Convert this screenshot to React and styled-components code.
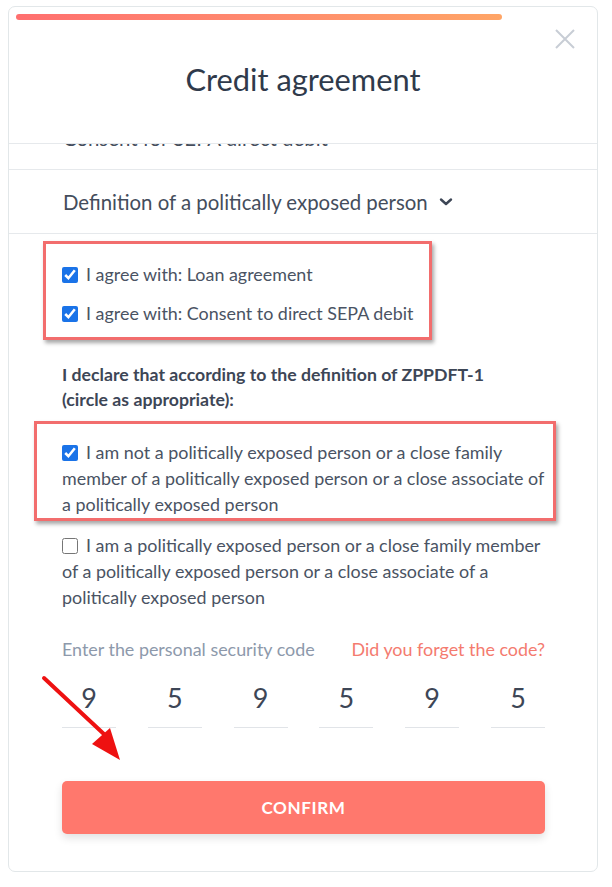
import React from 'react'
import styled, { createGlobalStyle } from 'styled-components'

const GlobalStyle = createGlobalStyle`
    html, body {
        margin: 0;
        padding: 0;
        background: #ffffff;
    }
    body {
        font-family: Lato, "Noto Sans", sans-serif;
        color: #3d4656;
    }
`

const Page = styled.div`
    padding: 6px 12px 14px 8px;
`

const Card = styled.div`
    position: relative;
    width: 590px;
    height: 866px;
    box-sizing: border-box;
    border: 1px solid #e2e7e9;
    border-radius: 7px;
    background: #fff;
    display: flex;
    flex-direction: column;
    overflow: hidden;
`

const Header = styled.div`
    position: relative;
    height: 136px;
    flex-shrink: 0;
`

const Progress = styled.div`
    margin: 7px 0 0 7px;
    width: 486px;
    height: 6px;
    border-radius: 3px;
    background: linear-gradient(to right, #ff6f6f 0%, #ff8a6e 50%, #ffa566 100%);
`

const Close = styled.button`
    position: absolute;
    top: 20px;
    right: 20px;
    width: 24px;
    height: 24px;
    padding: 0;
    border: none;
    background: none;
    cursor: pointer;
`

const Title = styled.h1`
    margin: 41px 0 0;
    text-align: center;
    font-size: 30.8px;
    font-weight: 400;
    color: #2f3a4b;
`

const Scroll = styled.div`
    flex: 1;
    border-top: 1px solid #e6e9ec;
    overflow: hidden;
`

const ScrollInner = styled.div`
    margin-top: -38px;
`

const Accordion = styled.div`
    height: 63px;
    border-bottom: 1px solid #e6e9ec;
    display: flex;
    align-items: center;
    padding-left: 54px;
    font-size: 20.4px;
    color: #444d5c;
    gap: 11px;
`

const Body = styled.div`
    padding: 0 52px 0 53px;
    display: flex;
    flex-direction: column;
`

const Group = styled.div`
    position: relative;
    display: flex;
    flex-direction: column;
    gap: 13px;
    margin-top: ${p => p.top}px;
    &::before {
        content: '';
        position: absolute;
        top: ${p => p.box[0]}px;
        right: ${p => p.box[1]}px;
        bottom: ${p => p.box[2]}px;
        left: ${p => p.box[3]}px;
        border: 3px solid #f26d6d;
        box-shadow: 2px 3px 4px rgba(0, 0, 0, 0.35);
        pointer-events: none;
    }
`

const Check = styled.label`
    display: block;
    font-size: 17.9px;
    line-height: 26px;
    color: #4a5363;
    input {
        width: 16px;
        height: 16px;
        margin: 0 8px 0 0;
        vertical-align: -2px;
        accent-color: #1a73e8;
    }
`

const Declare = styled.p`
    margin: 36px 0 27px;
    font-size: 17.7px;
    font-weight: 700;
    line-height: 25px;
    color: #3d4656;
`

const Plain = styled.div`
    margin-top: 15px;
`

const CodeHead = styled.div`
    margin-top: 28px;
    display: flex;
    justify-content: space-between;
    font-size: 17.9px;
`

const CodeLabel = styled.span`
    color: #8d99ab;
`

const Forgot = styled.a`
    color: #f47b6f;
    text-decoration: none;
    cursor: pointer;
`

const Digits = styled.div`
    position: relative;
    margin-top: 13px;
    display: flex;
    justify-content: space-between;
`

const Digit = styled.div`
    width: 54px;
    height: 54px;
    border-bottom: 1px solid #e1e4e8;
    text-align: center;
    font-size: 27px;
    line-height: 50px;
    color: #3d4656;
`

const Arrow = styled.svg`
    position: absolute;
    left: -22px;
    top: 1px;
    pointer-events: none;
`

const Confirm = styled.button`
    margin-top: 53px;
    height: 53px;
    border: none;
    border-radius: 5px;
    background: #ff786d;
    color: #fff;
    font-family: inherit;
    font-size: 17.1px;
    font-weight: 700;
    letter-spacing: 0.6px;
    box-shadow: 0 4px 8px rgba(0, 0, 0, 0.12);
    cursor: pointer;
`

const code = ['9', '5', '9', '5', '9', '5']

export default function App() {
    return (
        <Page>
            <GlobalStyle />
            <Card>
                <Header>
                    <Progress />
                    <Close aria-label="close">
                        <svg width="24" height="24" viewBox="0 0 24 24">
                            <path d="M3 3 L21 21 M21 3 L3 21" stroke="#c8cdd5" strokeWidth="2" />
                        </svg>
                    </Close>
                    <Title>Credit agreement</Title>
                </Header>
                <Scroll>
                    <ScrollInner>
                        <Accordion>
                            Consent for SEPA direct debit
                            <Chevron />
                        </Accordion>
                        <Accordion>
                            Definition of a politically exposed person
                            <Chevron />
                        </Accordion>
                        <Body>
                            <Group top={27} box={[-20, 113, -14, -19]}>
                                <Check><input type="checkbox" defaultChecked />I agree with: Loan agreement</Check>
                                <Check><input type="checkbox" defaultChecked />I agree with: Consent to direct SEPA debit</Check>
                            </Group>
                            <Declare>
                                I declare that according to the definition of ZPPDFT-1<br />
                                (circle as appropriate):
                            </Declare>
                            <Group top={0} box={[-18, -11, -4, -28]}>
                                <Check><input type="checkbox" defaultChecked />I am not a politically exposed person or a close family member of a politically exposed person or a close associate of a politically exposed person</Check>
                            </Group>
                            <Plain>
                                <Check><input type="checkbox" />I am a politically exposed person or a close family member of a politically exposed person or a close associate of a politically exposed person</Check>
                            </Plain>
                            <CodeHead>
                                <CodeLabel>Enter the personal security code</CodeLabel>
                                <Forgot>Did you forget the code?</Forgot>
                            </CodeHead>
                            <Digits>
                                {code.map((d, i) => <Digit key={i}>{d}</Digit>)}
                                <Arrow width="100" height="95" viewBox="0 0 100 95">
                                    <line x1="4" y1="4" x2="66" y2="62" stroke="#ee1111" strokeWidth="4" strokeLinecap="round" />
                                    <polygon points="80,86 52,70 70,54" fill="#ee1111" />
                                </Arrow>
                            </Digits>
                            <Confirm>CONFIRM</Confirm>
                        </Body>
                    </ScrollInner>
                </Scroll>
            </Card>
        </Page>
    )
}

function Chevron() {
    return (
        <svg width="14" height="10" viewBox="0 0 14 10">
            <path d="M2 2.5 L7 7 L12 2.5" fill="none" stroke="#3d4656" strokeWidth="2.4" strokeLinecap="round" strokeLinejoin="round" />
        </svg>
    )
}
